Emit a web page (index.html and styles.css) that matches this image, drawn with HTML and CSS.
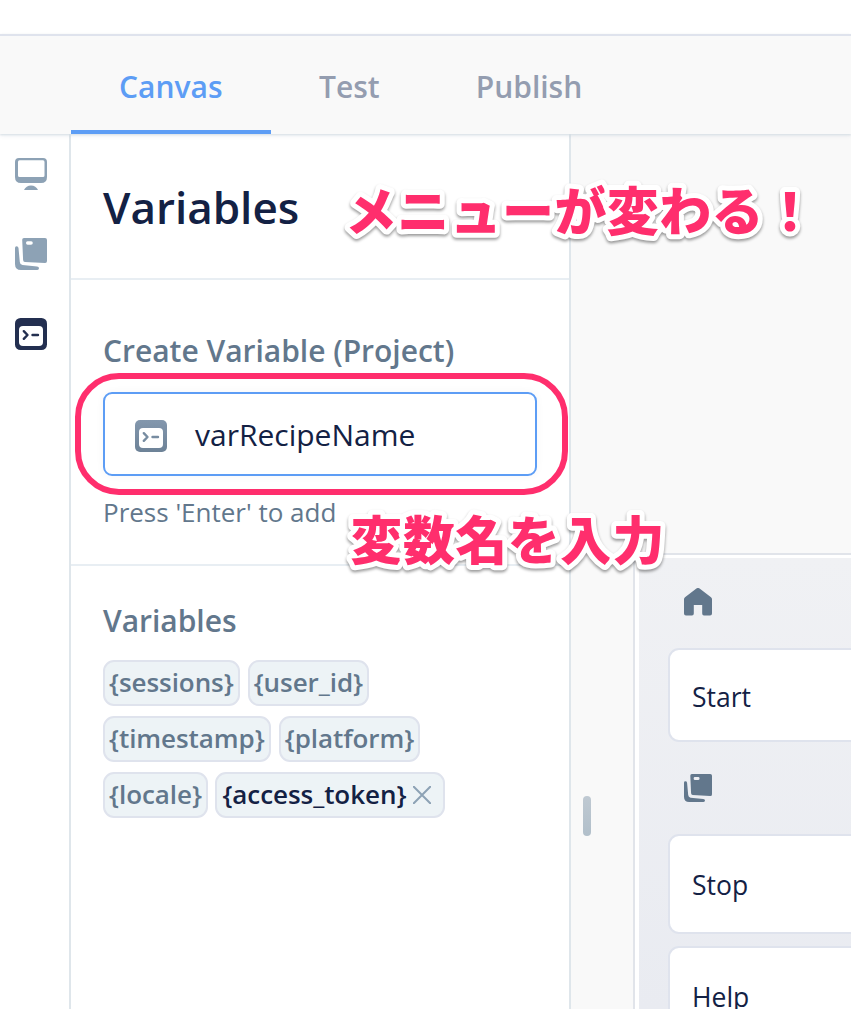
FILE: index.html
```html
<!DOCTYPE html>
<html lang="ja">
<head>
<meta charset="utf-8">
<title>Variables</title>
<link rel="stylesheet" href="styles.css">
</head>
<body>
<div class="app">
  <header class="tabs">
    <a class="tab active">Canvas</a>
    <a class="tab">Test</a>
    <a class="tab">Publish</a>
  </header>
  <div class="body">
    <nav class="rail">
      <svg class="ico light" viewBox="0 0 32 32"><path fill-rule="evenodd" d="M4 0H28Q32 0 32 4V19Q32 25 26 25H6Q0 25 0 19V4Q0 0 4 0ZM4.500 2.300Q3 2.300 3 4V17.500Q3 19 4.500 19H28Q29.500 19 29.500 17.500V4Q29.500 2.300 28 2.300Z"/><path d="M9 32C10 29.500 13 27.500 16 27.500S22 29.500 23 32Z"/></svg>
      <svg class="ico light" viewBox="0 0 32 32"><path fill-rule="evenodd" d="M9 0H30Q32 0 32 2V23Q32 25.200 30 25.100L10 24Q8.200 23.900 8.100 22L7.200 2Q7.100 0 9 0ZM12.500 3.300Q11 3.300 11 5T12.700 6.800H16Q17.800 6.800 17.800 5T16 3.300Z"/><path d="M1.500 8.300Q3.300 8.300 3.500 10L4.800 24Q5 26.700 7.500 27L22 28.500Q24 28.700 24 30.300T22.300 32H6Q0 32 0 26V10Q0 8.300 1.500 8.300Z"/></svg>
      <svg class="ico dark" viewBox="0 0 32 32"><rect width="32" height="32" rx="5.500"/><rect class="hole" x="4" y="8" width="24" height="20" rx="4"/><path class="line" d="M8.800 13.200L12.500 17L8.800 20.800M17.500 17H23"/></svg>
    </nav>
    <aside class="panel">
      <h1 class="title">Variables</h1>
      <section class="create">
        <h2 class="label">Create Variable (Project)</h2>
        <div class="field">
          <svg class="ico slate" viewBox="0 0 32 32"><defs><linearGradient id="g" x2="0" y2="1"><stop stop-color="#8397ad"/><stop offset="1" stop-color="#6d8297"/></linearGradient></defs><rect width="32" height="32" rx="5" fill="url(#g)"/><rect class="hole" x="4" y="8" width="24" height="20" rx="4"/><path class="line" d="M8.800 13.200L12.500 17L8.800 20.800M17.500 17H23"/></svg>
          <span class="value">varRecipeName</span>
        </div>
        <p class="hint">Press 'Enter' to add</p>
      </section>
      <section class="list">
        <h2 class="label">Variables</h2>
        <div class="tags">
          <span class="tag">{sessions}</span><span class="tag">{user_id}</span>
          <span class="tag">{timestamp}</span><span class="tag">{platform}</span>
          <span class="tag">{locale}</span><span class="tag own">{access_token}<svg class="close" viewBox="0 0 18 18"><path d="M.8.800L17.200 17.200M17.200.800L.8 17.200"/></svg></span>
        </div>
      </section>
    </aside>
    <main class="canvas">
      <div class="handle"></div>
      <div class="block">
        <svg class="bico" viewBox="0 0 28 28"><path d="M12.400.500Q14-.6 15.600.500L27 9.300Q28 10.200 28 11V25.500Q28 27.500 26 27.500H20Q18.200 27.500 18.200 25.500V17H9.800V25.500Q9.800 27.500 8 27.500H2Q0 27.500 0 25.500V11Q0 10.200 1 9.300Z"/></svg>
        <div class="card start">Start</div>
        <svg class="bico second" viewBox="0 0 32 32"><path fill-rule="evenodd" d="M9 0H30Q32 0 32 2V23Q32 25.200 30 25.100L10 24Q8.200 23.900 8.100 22L7.200 2Q7.100 0 9 0ZM12.500 3.300Q11 3.300 11 5T12.700 6.800H16Q17.800 6.800 17.800 5T16 3.300Z"/><path d="M1.500 8.300Q3.300 8.300 3.500 10L4.800 24Q5 26.700 7.500 27L22 28.500Q24 28.700 24 30.300T22.300 32H6Q0 32 0 26V10Q0 8.300 1.500 8.300Z"/></svg>
        <div class="card stop">Stop</div>
        <div class="card help">Help</div>
      </div>
    </main>
  </div>
  <div class="ring"></div>
  <svg class="notes" viewBox="0 0 851 1009">
    <text x="345" y="230.500" textLength="471">メニューが変わる！</text>
    <text x="350.500" y="560" textLength="314">変数名を入力</text>
  </svg>
</div>
</body>
</html>
```
FILE: styles.css
```css
* { box-sizing: border-box; }
body { margin: 0; font-family: "Open Sans", "Noto Sans", sans-serif; color: #132144; background: #fff; }
h1, h2, p { margin: 0; }
.app { position: relative; width: 851px; height: 1009px; padding-top: 34px; overflow: hidden; display: flex; flex-direction: column; }
.tabs { display: flex; flex: none; height: 100px; padding-left: 71px; border-top: 2px solid #dfe3ed; background: #f9f9f9; box-shadow: 0 1px 2px #d6dfe5, 0 2px 5px rgba(20,40,80,.06); position: relative; }
.tab { padding: 0 48px; font-size: 30px; font-weight: 600; line-height: 102px; color: #949db0; border-bottom: 4px solid transparent; }
.tab.active { color: #5d9df5; border-color: #5d9df5; width: 200px; }
.body { display: flex; flex: 1; min-height: 0; }
.rail { width: 71px; flex: none; border-right: 2px solid #dfe6eb; padding: 24px 0 0 15px; display: flex; flex-direction: column; gap: 48px; }
.ico { width: 32px; height: 32px; flex: none; display: block; }
.light { fill: #8da2b5; }
.dark { fill: #232f50; }
.hole { fill: #fff; }
.line { fill: none; stroke: #232f50; stroke-width: 2.400; stroke-linecap: round; stroke-linejoin: round; }
.slate .line { stroke: #778ca1; }
.panel { width: 500px; flex: none; border-right: 2px solid #dfe6eb; }
.title { height: 146px; padding-left: 32px; border-bottom: 2px solid #e8eef3; font-size: 44px; font-weight: 600; line-height: 147px; }
.create { height: 286px; padding: 50px 32px 0; border-bottom: 2px solid #e8eef3; }
.label { font-size: 30px; font-weight: 600; line-height: 42px; letter-spacing: -.02px; color: #62778c; }
.field { display: flex; align-items: center; gap: 28px; height: 84px; margin-top: 20px; padding: 4px 0 0 30px; border: 2px solid #5d9df5; border-radius: 9px; box-shadow: 0 0 8px rgba(20,40,80,.04); }
.value { font-size: 30px; line-height: 76px; margin-top: -2px; }
.hint { margin-top: 18px; font-size: 26px; line-height: 36px; color: #62778c; }
.list { padding: 34px 32px 0; }
.tags { display: flex; flex-wrap: wrap; gap: 10px 8px; margin-top: 18px; width: 350px; }
.tag { display: flex; align-items: center; height: 46px; padding: 0 4px 2px; border: 2px solid #dfe3ed; border-radius: 11px; background: #edf3f6; font-size: 26px; font-weight: 600; line-height: 40px; letter-spacing: -.06px; color: #62778c; }
.own { color: #132144; padding: 0 12px 2px 5px; margin-left: -.5px; }
.close { width: 18px; height: 18px; margin: 2px 0 0 7px; stroke: #8da2b5; stroke-width: 2; fill: none; stroke-linecap: round; }
.canvas { flex: 1; min-width: 0; display: flex; background: #f9f9f9; }
.handle { flex: none; width: 8px; height: 40px; margin: 662px 44px 0 12px; border-radius: 4px; background: linear-gradient(#bfc9d2, #b1bfca); }
.block { flex: 1; margin-top: 421px; border-left: 4px solid #fff; border-top: 3px solid #fff; box-shadow: 0 0 0 2px #e1e4ea; background: linear-gradient(#f0f1f4, #e9ebf1); padding: 30px 0 0 29px; display: flex; flex-direction: column; }
.bico { width: 28px; height: 28px; margin-left: 16px; flex: none; fill: #62778c; }
.second { margin-top: 32px; }
.card { flex: none; margin-right: -10px; padding-left: 22px; background: #fff; border: 2px solid #dfe3ed; border-radius: 11px; font-size: 26.500px; line-height: 94px; }
.start { height: 94px; margin-top: 32px; }
.stop { height: 100px; margin-top: 32px; line-height: 99px; }
.help { height: 100px; margin-top: 12px; line-height: 99px; }
.ring { position: absolute; left: 75px; top: 373px; width: 493px; height: 122px; border: 6px solid #ff2e6d; border-radius: 44px; }
.notes { position: absolute; left: 0; top: 0; width: 851px; height: 1009px; }
.notes text { font-family: "Noto Sans CJK JP", sans-serif; font-size: 52px; font-weight: 900; fill: #ff2e6d; stroke: #fff; stroke-width: 10px; stroke-linejoin: round; paint-order: stroke; filter: drop-shadow(0 2px 1.500px rgba(0,0,0,.4)); }
```
